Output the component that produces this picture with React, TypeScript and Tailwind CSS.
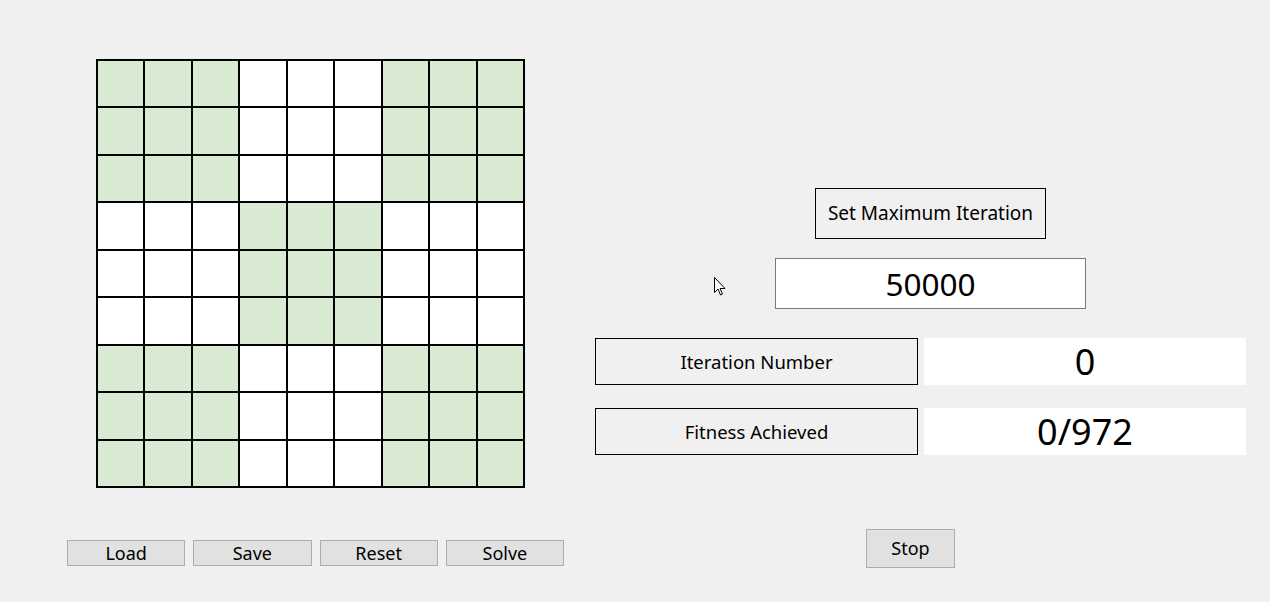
import React from 'react';

const F = "font-['Segoe_UI','Noto_Sans',sans-serif]";

// 1 = green, 0 = white
const PATTERN = [
  [1, 1, 1, 0, 0, 0, 1, 1, 1],
  [1, 1, 1, 0, 0, 0, 1, 1, 1],
  [1, 1, 1, 0, 0, 0, 1, 1, 1],
  [0, 0, 0, 1, 1, 1, 0, 0, 0],
  [0, 0, 0, 1, 1, 1, 0, 0, 0],
  [0, 0, 0, 1, 1, 1, 0, 0, 0],
  [1, 1, 1, 0, 0, 0, 1, 1, 1],
  [1, 1, 1, 0, 0, 0, 1, 1, 1],
  [1, 1, 1, 0, 0, 0, 1, 1, 1],
];

function Board() {
  return (
    <div className="grid grid-cols-9 grid-rows-9 w-[429px] h-[429px] bg-black p-[2px] gap-[2px]">
      {PATTERN.flat().map((v, i) => (
        <div key={i} className={v ? 'bg-[#d9ead3]' : 'bg-white'} />
      ))}
    </div>
  );
}

function SmallButton({ label }: { label: string }) {
  return (
    <button className="shrink-0 w-[118.25px] h-[26px] bg-[#e1e1e1] border border-[#adadad] text-[18px] leading-none text-black flex items-center justify-center">
      {label}
    </button>
  );
}

function Cursor() {
  return (
    <svg className="absolute left-[714px] top-[277px]" width="14" height="20" viewBox="0 0 14 20">
      <path
        d="M0.5 0.5 L0.5 15.5 L4 12 L6.5 18 L8.5 17 L6 11.5 L11 11.5 Z"
        fill="white"
        stroke="black"
        strokeWidth="1"
        strokeLinejoin="miter"
      />
    </svg>
  );
}

export default function App() {
  return (
    <div className={`relative w-[1270px] h-[602px] bg-[#f0f0f0] flex ${F}`}>
      {/* Left: board + actions */}
      <div className="w-[564px] shrink-0 flex flex-col pl-[67px] pt-[59px]">
        <div className="ml-[29px]">
          <Board />
        </div>
        <div className="flex gap-[8px] mt-[52px]">
          <SmallButton label="Load" />
          <SmallButton label="Save" />
          <SmallButton label="Reset" />
          <SmallButton label="Solve" />
        </div>
      </div>

      {/* Right: solver controls */}
      <div className="flex flex-col pt-[188px] ml-[31px]">
        <button className="ml-[220px] w-[231px] h-[51px] border border-black bg-[#f0f0f0] text-[19px] text-black flex items-center justify-center">
          Set Maximum Iteration
        </button>
        <div className="ml-[180px] mt-[19px] w-[311px] h-[51px] border border-[#7a7a7a] bg-white text-[31.5px] text-black flex items-center justify-center">
          50000
        </div>

        <div className="flex gap-[6px] mt-[29px]">
          <div className="w-[323px] h-[47px] border border-black bg-[#f0f0f0] text-[18.5px] text-black flex items-center justify-center">
            Iteration Number
          </div>
          <div className="w-[322px] h-[47px] bg-white text-[36px] text-black flex items-center justify-center">
            0
          </div>
        </div>

        <div className="flex gap-[6px] mt-[23px]">
          <div className="w-[323px] h-[47px] border border-black bg-[#f0f0f0] text-[18.5px] text-black flex items-center justify-center">
            Fitness Achieved
          </div>
          <div className="w-[322px] h-[47px] bg-white text-[36px] text-black flex items-center justify-center">
            0/972
          </div>
        </div>

        <button className="ml-[271px] mt-[74px] w-[89px] h-[39px] bg-[#e1e1e1] border border-[#adadad] text-[18px] text-black flex items-center justify-center">
          Stop
        </button>
      </div>

      <Cursor />
    </div>
  );
}
